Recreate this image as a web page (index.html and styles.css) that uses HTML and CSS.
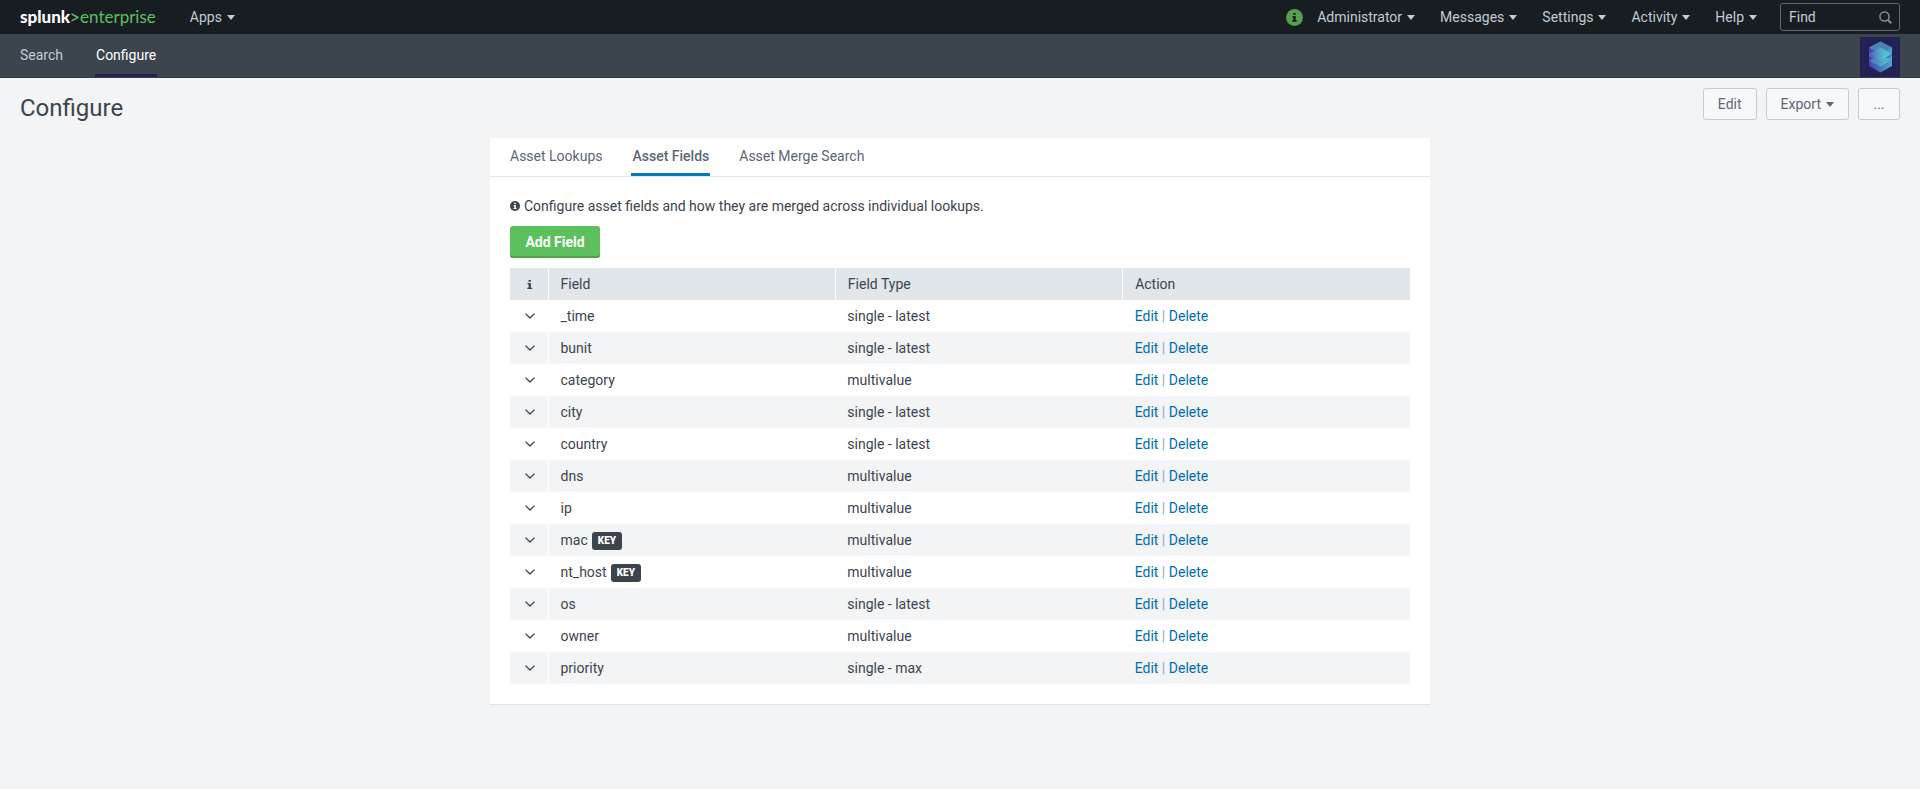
FILE: index.html
```html
<!DOCTYPE html>
<html lang="en">
<head>
<meta charset="utf-8">
<title>Configure | Splunk</title>
<link rel="stylesheet" href="styles.css">
</head>
<body>
<svg class="defs" aria-hidden="true">
  <symbol id="chevron" viewBox="0 0 10 6"><path d="M.5 .6 5 5 9.500 .6" fill="none" stroke="currentColor" stroke-width="1.300"/></symbol>
</svg>
<header class="topbar">
  <a class="logo" href="#"><span class="logo-name">splunk</span><svg class="logo-mark" viewBox="0 0 8 11"><path d="M.5 1v1.800l4.900 2.600L.5 8v1.800l7-3.700V4.700z" fill="#5cc05c"/></svg><span class="logo-edition">enterprise</span></a>
  <button class="menu" type="button">Apps<i class="caret"></i></button>
  <div class="topbar-right">
    <svg class="health" viewBox="0 0 17 17" role="img" aria-label="Health"><circle cx="8.500" cy="8.500" r="8.500" fill="#53a051"/><path d="M7.300 4h2.400v1.800H7.300zM6.500 7h3.200v4.300h1.100v1.400H6.200v-1.400h1.100V8.400h-.8z" fill="#1a1c20"/></svg>
    <button class="menu" type="button">Administrator<i class="caret"></i></button>
    <button class="menu" type="button">Messages<i class="caret"></i></button>
    <button class="menu" type="button">Settings<i class="caret"></i></button>
    <button class="menu" type="button">Activity<i class="caret"></i></button>
    <button class="menu" type="button">Help<i class="caret"></i></button>
    <label class="find">
      <input type="text" placeholder="Find" aria-label="Find">
      <svg class="find-icon" viewBox="0 0 13 13"><circle cx="5.500" cy="5.500" r="4.600" fill="none" stroke="#818d99" stroke-width="1.500"/><path d="m8.800 8.800 3.400 3.400" stroke="#818d99" stroke-width="2"/></svg>
    </label>
  </div>
</header>
<nav class="appbar">
  <a class="appbar-link" href="#">Search</a>
  <a class="appbar-link current" href="#">Configure</a>
  <svg class="app-icon" viewBox="0 0 40 40" role="img" aria-label="App">
    <defs>
      <linearGradient id="side" x1="0" x2="1" y1="0" y2="0"><stop offset="0" stop-color="#453fb5"/><stop offset="1" stop-color="#4aabc8"/></linearGradient>
      <linearGradient id="sheet" x1="0" x2="1" y1="0" y2="0"><stop offset="0" stop-color="#5364c4"/><stop offset=".7" stop-color="#55c8cc"/><stop offset="1" stop-color="#4fb5cc"/></linearGradient>
    </defs>
    <rect width="40" height="40" rx="1" fill="#232153"/>
    <path d="M20.500 4.500 32 10.500v18.500l-11.500 6.500L9 29V10.500z" fill="url(#side)"/>
    <path d="M20.500 4.500 32 10.500 20.500 17 9 10.500z" fill="#4b83b3"/>
    <path d="m9 17 11.500 6L32 17v2l-5 2.500 5 2.500-11.500 6L9 24l5-2.500L9 19z" fill="#4278b8"/>
    <path d="m20.500 17.500 11.500 6-11.500 6-11.500-6z" fill="url(#sheet)" opacity=".8"/>
    <path d="m20.500 10.500 11.500 6.500-11.500 6L9 17z" fill="url(#sheet)" opacity=".9"/>
  </svg>
</nav>
<main>
  <div class="page-head">
    <h1>Configure</h1>
    <div class="actions">
      <button class="btn" type="button">Edit</button>
      <button class="btn" type="button">Export<i class="caret"></i></button>
      <button class="btn" type="button">...</button>
    </div>
  </div>
  <section class="panel">
    <div class="tabs" role="tablist">
      <button class="tab" type="button" role="tab">Asset Lookups</button>
      <button class="tab active" type="button" role="tab" aria-selected="true">Asset Fields</button>
      <button class="tab" type="button" role="tab">Asset Merge Search</button>
    </div>
    <div class="panel-body">
      <p class="hint"><svg class="hint-icon" viewBox="0 0 10 10"><circle cx="5" cy="5" r="5" fill="#3c444d"/><path d="M4.200 1.800h1.700V3H4.200zM3.600 4h2.300v3h.7v1.100H3.500V7h.8V5h-.7z" fill="#fff"/></svg>Configure asset fields and how they are merged across individual lookups.</p>
      <button class="add" type="button">Add Field</button>
      <table class="fields">
        <thead><tr><th class="info"><svg class="info-icon" viewBox="0 0 6 9" role="img" aria-label="Info"><path d="M1.500 0h2.400v1.700H1.500zM.5 3h3.400v4.700h1.300V9H.3V7.700h1.300V4.300H.5z" fill="#3c444d"/></svg></th><th>Field</th><th>Field Type</th><th>Action</th></tr></thead>
        <tbody id="rows"></tbody>
      </table>
    </div>
  </section>
</main>
<script src="fields.js"></script>
</body>
</html>
```
FILE: styles.css
```css
* { box-sizing: border-box; }
body {
  margin: 0;
  background: #f2f4f5;
  color: #3c444d;
  font: 14px/20px Roboto, "Liberation Sans", sans-serif;
}
button, input { font: inherit; color: inherit; }
button { background: none; border: 0; padding: 0; cursor: pointer; }
a { text-decoration: none; }
.defs { display: none; }
.caret {
  display: inline-block;
  margin-left: 5px;
  vertical-align: 2px;
  border: 4px solid transparent;
  border-top: 5px solid currentColor;
  border-bottom: 0;
}

.topbar {
  display: flex;
  align-items: center;
  height: 34px;
  padding: 0 20px;
  background: #171d21;
  color: #c3cbd4;
}
.logo { display: flex; align-items: center; margin-right: 34px; font: 17px/20px Lato, sans-serif; }
.logo-name { color: #fff; font-weight: 900; }
.logo-mark { width: 8px; height: 11px; margin: 0 1px; }
.logo-edition { color: #5cc05c; }
.topbar-right { display: flex; align-items: center; gap: 25px; margin-left: auto; }
.health { width: 17px; height: 17px; margin-right: -11px; }
.find {
  display: flex;
  align-items: center;
  width: 120px;
  height: 28px;
  margin-left: -2px;
  padding: 0 7px 0 8px;
  border: 1px solid #5c6773;
  border-radius: 3px;
}
.find input { flex: 1; min-width: 0; padding: 0; background: none; border: 0; outline: 0; }
.find input::placeholder { color: #c3cbd4; opacity: 1; }
.find-icon { width: 13px; height: 13px; }

.appbar {
  display: flex;
  align-items: stretch;
  gap: 31px;
  height: 44px;
  padding: 0 20px;
  background: #3c444d;
  border-bottom: 1px solid #333b43;
}
.appbar-link { padding: 11px 1px 0; color: #c3cbd4; }
.appbar-link:first-child { padding-left: 0; }
.appbar-link.current { color: #fff; border-bottom: 3px solid #232153; }
.app-icon { width: 40px; height: 40px; margin: 3px 0 0 auto; }

.page-head { display: flex; justify-content: space-between; align-items: flex-start; padding: 10px 20px 14px; }
h1 { margin: 6px 0 2px; font-size: 24px; line-height: 28px; font-weight: 400; }
.actions { display: flex; gap: 9px; }
.btn {
  min-width: 42px;
  height: 32px;
  padding: 0 14px;
  background: #f7f8fa;
  border: 1px solid #c3cbd4;
  border-radius: 3px;
  color: #5c6773;
}

.panel {
  max-width: 940px;
  margin: 0 auto;
  background: #fff;
  border-bottom: 1px solid #dfe4e8;
}
.tabs { display: flex; gap: 28px; padding: 0 20px; border-bottom: 1px solid #e1e6eb; }
.tab { height: 38px; padding: 0 1px; border-bottom: 3px solid transparent; color: #5c6773; }
.tab:first-child { padding-left: 0; }
.tab.active { border-color: #007abd; font-weight: 500; }
.panel-body { padding: 19px 20px 20px; }
.hint { display: flex; align-items: center; gap: 4px; margin: 0 0 10px; }
.hint-icon { width: 10px; height: 10px; }
.add {
  display: block;
  min-width: 90px;
  height: 32px;
  padding: 0 15px;
  margin-bottom: 10px;
  background: #5cc05c;
  box-shadow: inset 0 -2px #53a051;
  border-radius: 3px;
  color: #fff;
  font-weight: 700;
}
.fields { width: 100%; table-layout: fixed; border-collapse: collapse; }
.fields th, .fields td { height: 32px; padding: 0 12px; text-align: left; font-weight: 400; }
.fields th { background: #e1e6ea; border-left: 1px solid #fff; }
.fields th.info { width: 38px; border-left: 0; }
.fields td:nth-child(2) { border-left: 1px solid #fff; }
.fields .info { padding: 0 0 0 2px; text-align: center; }
.fields tbody tr:nth-child(even) { background: #f2f4f5; }
.fields a { color: #006eaa; }
.info-icon { width: 6px; height: 9px; }
.chevron { width: 10px; height: 6px; vertical-align: 2px; }
.sep { color: #9aa5b1; }
.key {
  display: inline-block;
  margin-left: 4px;
  padding: 0 6px;
  background: #3c444d;
  border-radius: 3px;
  color: #fff;
  font-size: 10px;
  font-weight: 900;
  line-height: 18px;
  vertical-align: 1px;
}
```
FILE: fields.js
```js
const fields = [
  ["_time", "single - latest"],
  ["bunit", "single - latest"],
  ["category", "multivalue"],
  ["city", "single - latest"],
  ["country", "single - latest"],
  ["dns", "multivalue"],
  ["ip", "multivalue"],
  ["mac", "multivalue", true],
  ["nt_host", "multivalue", true],
  ["os", "single - latest"],
  ["owner", "multivalue"],
  ["priority", "single - max"],
];
document.getElementById("rows").innerHTML = fields.map(([name, type, key]) => `
  <tr>
    <td class="info"><button type="button" aria-label="Expand ${name}"><svg class="chevron"><use href="#chevron"/></svg></button></td>
    <td>${name}${key ? '<span class="key">KEY</span>' : ""}</td>
    <td>${type}</td>
    <td><a href="#">Edit</a> <span class="sep">|</span> <a href="#">Delete</a></td>
  </tr>`).join("");
```
